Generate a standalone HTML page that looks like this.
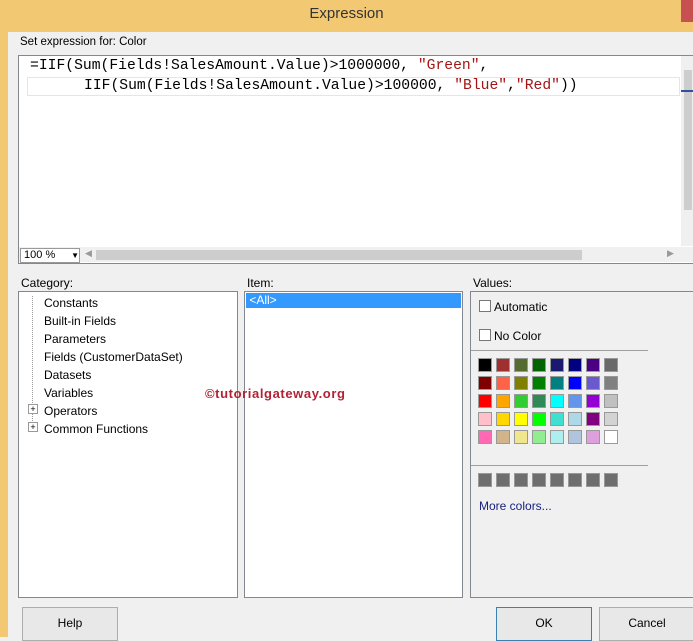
<!DOCTYPE html><html><head><style>
body{margin:0;width:693px;height:637px;overflow:hidden;background:#f0f0f0;font-family:"Liberation Sans",sans-serif;font-size:12px;color:#000;position:relative}
.a{position:absolute}
.sw{position:absolute;width:12px;height:12px;border:1px solid #999}
.btn{position:absolute;top:607px;height:32px;border:1px solid #adadad;background:#e8e8e8;text-align:center;line-height:30px;font-size:12px}
.mono{font-family:"Liberation Mono",monospace;font-size:14.7px}
</style></head><body>
<div class="a" style="left:0;top:0;width:693px;height:32px;background:#f3c873"></div>
<div class="a" style="left:0;top:0;width:8px;height:637px;background:#f3c873"></div>
<div class="a" style="left:8px;top:32px;width:685px;height:605px;background:#f0f0f0"></div>
<div class="a" style="left:0;top:5px;width:693px;text-align:center;font-size:15px;color:#333">Expression</div>
<div class="a" style="left:681px;top:0;width:12px;height:22px;background:#c75050"></div>
<div class="a" style="left:20px;top:36px;font-size:11.5px">Set expression for: Color</div>
<div class="a" style="left:18px;top:55px;width:674px;height:207px;background:#fff;border:1px solid #828790"></div>
<div class="a" style="left:27px;top:77px;width:651px;height:17px;border:1px solid #e5e5e5"></div>
<div class="a mono" style="left:30px;top:58px">=IIF(Sum(Fields!SalesAmount.Value)&gt;1000000, <span style="color:#a31515">"Green"</span>,</div>
<div class="a mono" style="left:84px;top:78px">IIF(Sum(Fields!SalesAmount.Value)&gt;100000, <span style="color:#a31515">"Blue"</span>,<span style="color:#a31515">"Red"</span>))</div>
<div class="a" style="left:681px;top:56px;width:12px;height:190px;background:#f0f0f0"></div>
<div class="a" style="left:684px;top:70px;width:8px;height:140px;background:#cdcdcd"></div>
<div class="a" style="left:681px;top:90px;width:12px;height:2px;background:#3050a0"></div>
<div class="a" style="left:19px;top:247px;width:674px;height:15px;background:#f0f0f0"></div>
<div class="a" style="left:20px;top:248px;width:58px;height:13px;background:#fff;border:1px solid #999;font-size:11px;line-height:13px">&nbsp;100 % <span style="float:right;font-size:8px">▼</span></div>
<div class="a" style="left:85px;top:248px;font-size:9px;color:#999">◀</div>
<div class="a" style="left:96px;top:250px;width:486px;height:10px;background:#cdcdcd"></div>
<div class="a" style="left:667px;top:248px;font-size:9px;color:#999">▶</div>
<div class="a" style="left:21px;top:276px">Category:</div>
<div class="a" style="left:247px;top:276px">Item:</div>
<div class="a" style="left:473px;top:276px">Values:</div>
<div class="a" style="left:18px;top:291px;width:218px;height:305px;background:#fff;border:1px solid #828790"></div>
<div class="a" style="left:244px;top:291px;width:217px;height:305px;background:#fff;border:1px solid #828790"></div>
<div class="a" style="left:470px;top:291px;width:223px;height:305px;background:#f0f0f0;border:1px solid #828790;border-right:none"></div>
<div class="a" style="left:32px;top:296px;height:133px;border-left:1px dotted #999"></div>
<div class="a" style="left:44px;top:294px;line-height:18px">Constants<br>Built-in Fields<br>Parameters<br>Fields (CustomerDataSet)<br>Datasets<br>Variables<br>Operators<br>Common Functions</div>
<div class="a" style="left:28px;top:404px;width:8px;height:8px;border:1px solid #999;background:#fff;font-size:9px;line-height:8px;text-align:center">+</div>
<div class="a" style="left:28px;top:422px;width:8px;height:8px;border:1px solid #999;background:#fff;font-size:9px;line-height:8px;text-align:center">+</div>
<div class="a" style="left:246px;top:293px;width:215px;height:15px;background:#3399ff;color:#fff;line-height:15px">&nbsp;&lt;All&gt;</div>
<div class="a" style="left:205px;top:386px;color:#b22234;font-weight:bold;font-size:13px;letter-spacing:0.6px">©tutorialgateway.org</div>
<div class="a" style="left:479px;top:300px;width:10px;height:10px;border:1px solid #777;background:#fff"></div>
<div class="a" style="left:494px;top:300px">Automatic</div>
<div class="a" style="left:479px;top:329px;width:10px;height:10px;border:1px solid #777;background:#fff"></div>
<div class="a" style="left:494px;top:329px">No Color</div>
<div class="a" style="left:471px;top:350px;width:177px;height:1px;background:#a0a0a0"></div>
<div class="a" style="left:471px;top:465px;width:177px;height:1px;background:#a0a0a0"></div>
<div id="g"></div>
<div class="a" style="left:479px;top:499px;color:#1a237e">More colors...</div>
<div class="btn" style="left:22px;width:94px">Help</div>
<div class="btn" style="left:496px;width:94px;border-color:#3c7fb1">OK</div>
<div class="btn" style="left:599px;width:94px">Cancel</div>
<script>
var c=[["#000","#a03030","#556b2f","#006400","#191970","#000080","#4b0082","#696969"],["#800000","#ff6347","#808000","#008000","#008080","#0000ff","#6a5acd","#808080"],["#f00","#ffa500","#32cd32","#2e8b57","#0ff","#6495ed","#9400d3","#c0c0c0"],["#ffc0cb","#ffd700","#ff0","#0f0","#40e0d0","#add8e6","#800080","#d3d3d3"],["#ff69b4","#d2b48c","#f0e68c","#90ee90","#afeeee","#b0c4de","#dda0dd","#fff"],["#6e6e6e","#6e6e6e","#6e6e6e","#6e6e6e","#6e6e6e","#6e6e6e","#6e6e6e","#6e6e6e"]];
var h="";c.forEach(function(r,i){r.forEach(function(x,j){var y=i<5?358+i*18:473;h+='<div class="sw" style="left:'+(478+j*18)+'px;top:'+y+'px;background:'+x+'"></div>'})});
document.getElementById("g").innerHTML=h;
</script>
</body></html>
